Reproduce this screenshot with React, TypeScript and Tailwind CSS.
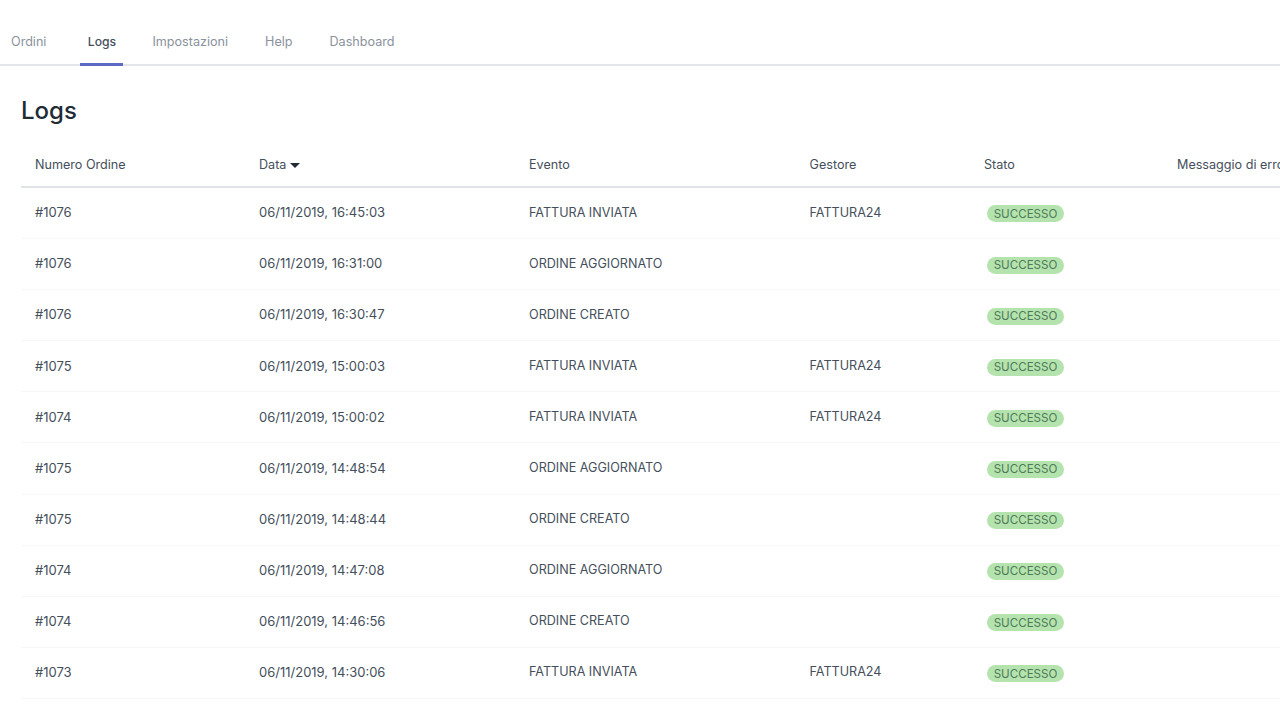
const tabs = ["Ordini", "Logs", "Impostazioni", "Help", "Dashboard"];

const logs = [
  ["#1076", "06/11/2019, 16:45:03", "FATTURA INVIATA", "FATTURA24"],
  ["#1076", "06/11/2019, 16:31:00", "ORDINE AGGIORNATO", ""],
  ["#1076", "06/11/2019, 16:30:47", "ORDINE CREATO", ""],
  ["#1075", "06/11/2019, 15:00:03", "FATTURA INVIATA", "FATTURA24"],
  ["#1074", "06/11/2019, 15:00:02", "FATTURA INVIATA", "FATTURA24"],
  ["#1075", "06/11/2019, 14:48:54", "ORDINE AGGIORNATO", ""],
  ["#1075", "06/11/2019, 14:48:44", "ORDINE CREATO", ""],
  ["#1074", "06/11/2019, 14:47:08", "ORDINE AGGIORNATO", ""],
  ["#1074", "06/11/2019, 14:46:56", "ORDINE CREATO", ""],
  ["#1073", "06/11/2019, 14:30:06", "FATTURA INVIATA", "FATTURA24"],
];

const cols = "grid grid-cols-[224px_270px_280.5px_174.5px_193px_200px] w-[1342px]";

function App() {
  return (
    <div className="h-[720px] w-[1280px] overflow-hidden bg-white font-['Inter',sans-serif] text-[12.6px] text-[#454f5b]">
      <nav className="flex h-[66px] items-end gap-[21px] border-b-2 border-[#e4e6eb] pl-[3px]">
        {tabs.map((tab) => (
          <div
            key={tab}
            className={
              tab === "Logs"
                ? "-mb-[2px] ml-[5px] flex h-[50px] w-[43px] items-center justify-center border-b-[3px] border-[#5c6ac4] pt-[5px] text-[12.2px] font-medium text-[#454f5b]"
                : "-mb-[2px] flex h-[50px] items-center border-b-[3px] border-transparent px-2 pt-[5px] text-[#8a929c]"
            }
          >
            {tab}
          </div>
        ))}
      </nav>

      <main className="pl-[21px]">
        <h1 className="mt-[28px] text-[24px] leading-[34px] font-medium text-[#212b36]">Logs</h1>

        <div className={`${cols} mt-[20px] h-[40px] items-start border-b-2 border-[#dfe3e8] pt-[7px] leading-[20px]`}>
          <div className="pl-[14px]">Numero Ordine</div>
          <div className="flex items-center gap-[4px] pl-[14px]">
            Data
            <svg width="10" height="5" viewBox="0 0 10 5" className="mt-[1px]">
              <path d="M0 0h10L5 5z" fill="#212b36" />
            </svg>
          </div>
          <div className="pl-[14px]">Evento</div>
          <div className="pl-[14px]">Gestore</div>
          <div className="pl-[14px]">Stato</div>
          <div className="whitespace-nowrap pl-[14px]">Messaggio di errore</div>
        </div>

        {logs.map((row, i) => (
          <div key={i} className={`${cols} h-[51.1px] items-center border-b border-[#f6f7f8]`}>
            <div className="pl-[14px] text-[13px]">{row[0]}</div>
            <div className="pl-[14px] text-[13px]">{row[1]}</div>
            <div className="pl-[14px]">{row[2]}</div>
            <div className="pl-[14px]">{row[3]}</div>
            <div className="pl-[17px]">
              <span className="mt-[3px] inline-flex h-[17px] w-[77px] items-center justify-center rounded-full bg-[#b5e3ae] pt-[1px] text-[11.6px] text-[#4e7a58]">
                SUCCESSO
              </span>
            </div>
            <div />
          </div>
        ))}
      </main>
    </div>
  );
}

export default App;
